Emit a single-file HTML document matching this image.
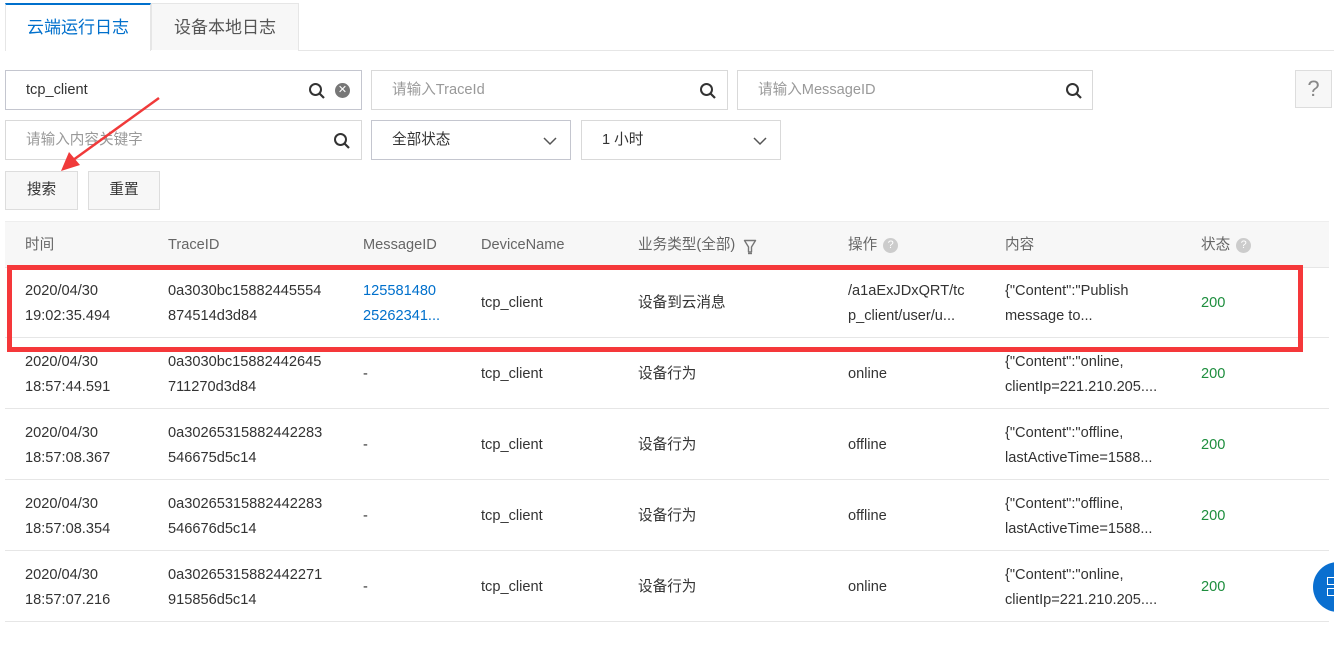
<!DOCTYPE html><html><head><meta charset="utf-8"><style>
*{margin:0;padding:0;box-sizing:border-box}
body{width:1334px;height:645px;background:#fff;font-family:"Liberation Sans","Noto Sans CJK SC",sans-serif;font-size:14.6px;color:#333;position:relative;overflow:hidden}
.a{position:absolute}
.box{position:absolute;border:1px solid #d9d9d9;background:#fff;height:40px;color:#999;padding-left:20px;line-height:38px}
.sel{color:#333;border-color:#c4c6cf}
.btn{position:absolute;border:1px solid #ddd;background:#f7f7f7;height:39px;line-height:37px;text-align:center;color:#333}
.ic{position:absolute;top:11px}
.cell{position:absolute;line-height:25px}
.row{position:absolute;left:5px;width:1324px;height:71px;border-bottom:1px solid #e6e6e6}
.g{color:#1e8e3e}
.q{display:inline-block;width:15px;height:15px;border-radius:50%;background:#ccc;color:#fff;font-size:11px;line-height:15px;text-align:center;vertical-align:middle;margin-left:6px}
</style></head><body>
<div class="a" style="left:5px;top:3px;width:146px;height:48px;border-top:2px solid #0070cc;border-left:1px solid #e6e6e6;border-right:1px solid #e6e6e6;background:#fff;color:#0070cc;font-size:17px;text-align:center;line-height:46px">云端运行日志</div>
<div class="a" style="left:151px;top:3px;width:148px;height:47px;border:1px solid #e6e6e6;border-bottom:none;background:#f7f7f7;color:#555;font-size:17px;text-align:center;line-height:48px">设备本地日志</div>
<div class="a" style="left:298px;top:50px;width:1036px;height:1px;background:#e6e6e6"></div>

<svg width="0" height="0" style="position:absolute"><defs><symbol id="s" viewBox="0 0 18 18"><circle cx="7.5" cy="7.5" r="5.5" fill="none" stroke="#333" stroke-width="2"/><path d="M11.5 11.5L16 16" stroke="#333" stroke-width="2.2"/></symbol><symbol id="d" viewBox="0 0 16 16"><path d="M2 5l6 6 6-6" fill="none" stroke="#555" stroke-width="1.5"/></symbol></defs></svg>

<div class="box sel" style="left:5px;top:70px;width:357px;color:#333">tcp_client
<svg class="ic" style="left:302px" width="18" height="18"><use href="#s"/></svg>
<span class="ic" style="left:329px;top:12px;width:15px;height:15px;border-radius:50%;background:#777;color:#fff;font-size:11px;line-height:15px;text-align:center">✕</span></div>
<div class="box" style="left:371px;top:70px;width:357px">请输入TraceId<svg class="ic" style="left:327px" width="18" height="18"><use href="#s"/></svg></div>
<div class="box" style="left:737px;top:70px;width:356px">请输入MessageID<svg class="ic" style="left:327px" width="18" height="18"><use href="#s"/></svg></div>
<div class="btn" style="left:1295px;top:70px;width:37px;height:38px;font-size:22px;color:#888;line-height:36px">?</div>

<div class="box" style="left:5px;top:120px;width:357px">请输入内容关键字<svg class="ic" style="left:327px" width="18" height="18"><use href="#s"/></svg></div>
<div class="box sel" style="left:371px;top:120px;width:200px;color:#333">全部状态<svg class="ic" style="left:170px;top:12px" width="16" height="16"><use href="#d"/></svg></div>
<div class="box" style="left:581px;top:120px;width:200px;color:#333">1 小时<svg class="ic" style="left:170px;top:12px" width="16" height="16"><use href="#d"/></svg></div>

<div class="btn" style="left:5px;top:171px;width:73px">搜索</div>
<div class="btn" style="left:88px;top:171px;width:72px">重置</div>

<svg class="a" style="left:55px;top:95px" width="110" height="80"><path d="M104 3L14 68" stroke="#f03a3a" stroke-width="2.5"/><path d="M6 76L14 57L25 70Z" fill="#f03a3a"/></svg>

<div class="a" style="left:5px;top:221px;width:1324px;height:47px;background:#f7f7f7;border-top:1px solid #eee;border-bottom:1px solid #e6e6e6;color:#666">
<span class="cell" style="left:20px;top:11px">时间</span>
<span class="cell" style="left:163px;top:11px">TraceID</span>
<span class="cell" style="left:358px;top:11px">MessageID</span>
<span class="cell" style="left:476px;top:11px">DeviceName</span>
<span class="cell" style="left:633px;top:11px">业务类型(全部)</span>
<svg class="a" style="left:738px;top:17px" width="14" height="16"><path d="M1.5 1.5H12.5L8.5 8V13H5.5V8Z" fill="none" stroke="#777" stroke-width="1.4" stroke-linejoin="round"/><path d="M5 14.5H9" stroke="#777" stroke-width="1.4"/></svg>
<span class="cell" style="left:843px;top:11px">操作<span class="q">?</span></span>
<span class="cell" style="left:1000px;top:11px">内容</span>
<span class="cell" style="left:1196px;top:11px">状态<span class="q">?</span></span>
</div>

<div class="row" style="top:267px"><span class="cell" style="left:20px;top:12px">2020/04/30<br>19:02:35.494</span><span class="cell" style="left:163px;top:12px">0a3030bc15882445554<br>874514d3d84</span><span class="cell" style="left:358px;top:12px;color:#0070cc">125581480<br>25262341...</span><span class="cell" style="left:476px;top:24px">tcp_client</span><span class="cell" style="left:633px;top:24px">设备到云消息</span><span class="cell" style="left:843px;top:12px">/a1aExJDxQRT/tc<br>p_client/user/u...</span><span class="cell" style="left:1000px;top:12px">{"Content":"Publish<br>message to...</span><span class="cell g" style="left:1196px;top:24px">200</span></div>
<div class="row" style="top:338px"><span class="cell" style="left:20px;top:12px">2020/04/30<br>18:57:44.591</span><span class="cell" style="left:163px;top:12px">0a3030bc15882442645<br>711270d3d84</span><span class="cell" style="left:358px;top:24px">-</span><span class="cell" style="left:476px;top:24px">tcp_client</span><span class="cell" style="left:633px;top:24px">设备行为</span><span class="cell" style="left:843px;top:24px">online</span><span class="cell" style="left:1000px;top:12px">{"Content":"online,<br>clientIp=221.210.205....</span><span class="cell g" style="left:1196px;top:24px">200</span></div>
<div class="row" style="top:409px"><span class="cell" style="left:20px;top:12px">2020/04/30<br>18:57:08.367</span><span class="cell" style="left:163px;top:12px">0a30265315882442283<br>546675d5c14</span><span class="cell" style="left:358px;top:24px">-</span><span class="cell" style="left:476px;top:24px">tcp_client</span><span class="cell" style="left:633px;top:24px">设备行为</span><span class="cell" style="left:843px;top:24px">offline</span><span class="cell" style="left:1000px;top:12px">{"Content":"offline,<br>lastActiveTime=1588...</span><span class="cell g" style="left:1196px;top:24px">200</span></div>
<div class="row" style="top:480px"><span class="cell" style="left:20px;top:12px">2020/04/30<br>18:57:08.354</span><span class="cell" style="left:163px;top:12px">0a30265315882442283<br>546676d5c14</span><span class="cell" style="left:358px;top:24px">-</span><span class="cell" style="left:476px;top:24px">tcp_client</span><span class="cell" style="left:633px;top:24px">设备行为</span><span class="cell" style="left:843px;top:24px">offline</span><span class="cell" style="left:1000px;top:12px">{"Content":"offline,<br>lastActiveTime=1588...</span><span class="cell g" style="left:1196px;top:24px">200</span></div>
<div class="row" style="top:551px"><span class="cell" style="left:20px;top:12px">2020/04/30<br>18:57:07.216</span><span class="cell" style="left:163px;top:12px">0a30265315882442271<br>915856d5c14</span><span class="cell" style="left:358px;top:24px">-</span><span class="cell" style="left:476px;top:24px">tcp_client</span><span class="cell" style="left:633px;top:24px">设备行为</span><span class="cell" style="left:843px;top:24px">online</span><span class="cell" style="left:1000px;top:12px">{"Content":"online,<br>clientIp=221.210.205....</span><span class="cell g" style="left:1196px;top:24px">200</span></div>

<div class="a" style="left:7px;top:265px;width:1296px;height:87px;border:5px solid #f5383a"></div>

<div class="a" style="left:1313px;top:562px;width:50px;height:50px;border-radius:50%;background:#0a6fd0"></div>
<div class="a" style="left:1327px;top:577px;width:8px;height:8px;border:1.5px solid #fff"></div>
<div class="a" style="left:1327px;top:588px;width:8px;height:8px;border:1.5px solid #fff"></div>
</body></html>
